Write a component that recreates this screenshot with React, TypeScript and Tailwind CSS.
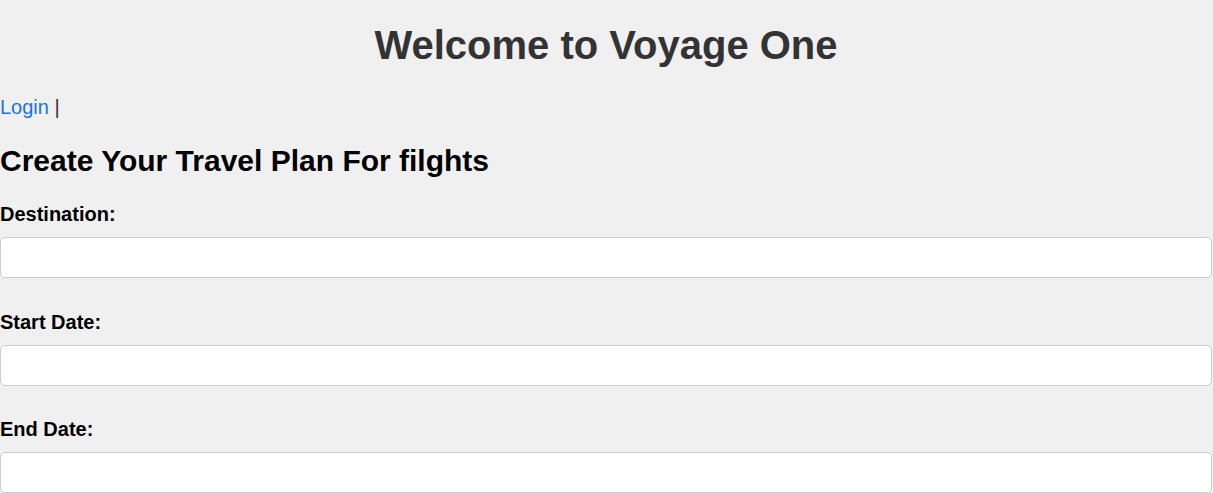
export default function App() {
  const fields = ["Destination:", "Start Date:", "End Date:"]

  return (
    <div className="min-h-[493px] bg-[#f0f0f0] pr-[1px] font-['Liberation_Sans',Arial,sans-serif] text-black">
      <h1 className="pt-[22px] text-center text-[40px] leading-[46px] font-bold text-[#333]">
        Welcome to Voyage One
      </h1>
      <div className="mt-[28px] text-[20px] leading-[23px] text-[#333]">
        <a href="#" className="text-[#1a73e8]">Login</a> |
      </div>
      <h2 className="mt-[25px] text-[30px] leading-[34px] font-bold">
        Create Your Travel Plan For filghts
      </h2>
      <form className="mt-[25px] flex flex-col">
        {fields.map((label) => (
          <div key={label} className="mb-[32.5px] flex flex-col">
            <label className="text-[20px] leading-[23px] font-bold">{label}</label>
            <input
              type="text"
              className="mt-[11px] h-[41px] w-full rounded-[5px] border border-[#ccc] bg-white px-[10px] text-[17px] outline-none"
            />
          </div>
        ))}
      </form>
    </div>
  )
}
